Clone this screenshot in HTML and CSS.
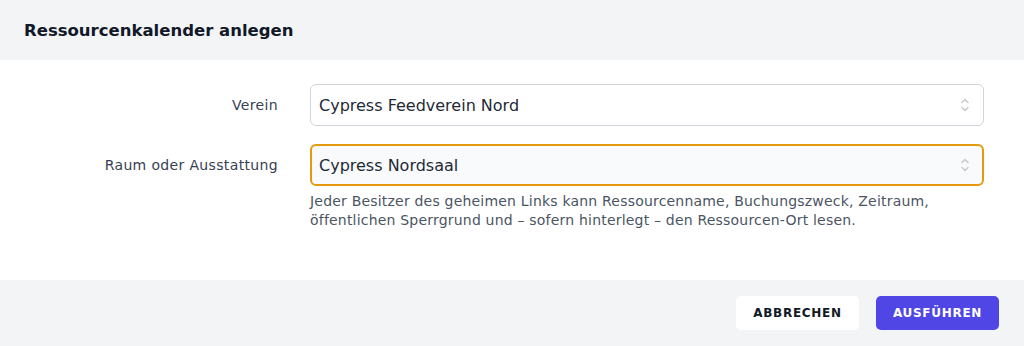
FILE: index.html
```html
<!DOCTYPE html>
<html lang="de">
<head>
    <meta charset="UTF-8">
    <meta name="viewport" content="width=device-width, initial-scale=1.0">
    <title>Ressourcenkalender anlegen</title>
    <link rel="stylesheet" href="styles.css">
</head>
<body>
    <div class="dialog">
        <div class="dialog-header">
            <h2>Ressourcenkalender anlegen</h2>
        </div>
        <form class="dialog-body">
            <label class="field-label" for="verein">Verein</label>
            <div class="field">
                <div class="select-wrap">
                    <select id="verein">
                        <option>Cypress Feedverein Nord</option>
                    </select>
                    <svg class="chevrons" viewBox="0 0 12 18" width="12" height="18"><path d="M3 6.5 6 3.5 9 6.5M3 11.5 6 14.5 9 11.5" fill="none" stroke="#c4c7cd" stroke-width="1.4" stroke-linecap="round" stroke-linejoin="round"/></svg>
                </div>
            </div>

            <label class="field-label" for="raum">Raum oder Ausstattung</label>
            <div class="field">
                <div class="select-wrap">
                    <select id="raum" class="focused">
                        <option>Cypress Nordsaal</option>
                    </select>
                    <svg class="chevrons" viewBox="0 0 12 18" width="12" height="18"><path d="M3 6.5 6 3.5 9 6.5M3 11.5 6 14.5 9 11.5" fill="none" stroke="#c4c7cd" stroke-width="1.4" stroke-linecap="round" stroke-linejoin="round"/></svg>
                </div>
                <p class="help">Jeder Besitzer des geheimen Links kann Ressourcenname, Buchungszweck, Zeitraum, öffentlichen Sperrgrund und – sofern hinterlegt – den Ressourcen-Ort lesen.</p>
            </div>
        </form>
        <div class="dialog-footer">
            <button type="button" class="btn btn-cancel">Abbrechen</button>
            <button type="button" class="btn btn-primary">Ausführen</button>
        </div>
    </div>
</body>
</html>
```

FILE: styles.css
```css
body {
    margin: 0;
    font-family: "DejaVu Sans", "Open Sans", sans-serif;
    color: #1f2937;
    background: #ffffff;
}
.dialog {
    width: 1024px;
    height: 346px;
    display: flex;
    flex-direction: column;
}
.dialog-header {
    background-color: #f3f4f6;
    height: 60px;
    padding: 0 24px;
    display: flex;
    align-items: center;
    box-sizing: border-box;
}
.dialog-header h2 {
    margin: 0;
    font-size: 16.5px;
    font-weight: 700;
    color: #111827;
}
.dialog-body {
    flex: 1;
    display: grid;
    grid-template-columns: 254px 1fr;
    column-gap: 32px;
    row-gap: 18px;
    align-content: start;
    padding: 24px 40px 0 24px;
}
.field-label {
    text-align: right;
    font-size: 14px;
    letter-spacing: 0.35px;
    color: #374151;
    height: 42px;
    line-height: 42px;
}
.select-wrap {
    position: relative;
}
.select-wrap select {
    width: 100%;
    height: 42px;
    box-sizing: border-box;
    border: 1px solid #d1d5db;
    border-radius: 6px;
    background: #ffffff;
    padding: 0 40px 0 8px;
    font-family: inherit;
    font-size: 16px;
    color: #1f2937;
    appearance: none;
    -webkit-appearance: none;
}
.select-wrap select.focused {
    border: 2px solid #e59a0c;
    padding-left: 7px;
    background: #f9fafb;
}
.chevrons {
    position: absolute;
    right: 13px;
    top: 12px;
    pointer-events: none;
}
.help {
    margin: 6px 0 0;
    font-size: 14px;
    letter-spacing: 0.2px;
    line-height: 19px;
    color: #4b5563;
}
.dialog-footer {
    background-color: #f3f4f6;
    height: 66px;
    display: flex;
    justify-content: flex-end;
    align-items: center;
    gap: 17px;
    padding: 0 25px;
    box-sizing: border-box;
}
.btn {
    height: 34px;
    width: 123px;
    border: none;
    border-radius: 5px;
    font-family: inherit;
    font-size: 12px;
    font-weight: 700;
    letter-spacing: 0.06em;
    text-transform: uppercase;
    cursor: pointer;
}
.btn-cancel {
    background-color: #ffffff;
    color: #111827;
}
.btn-primary {
    background-color: #4f46e5;
    color: #ffffff;
}
```
